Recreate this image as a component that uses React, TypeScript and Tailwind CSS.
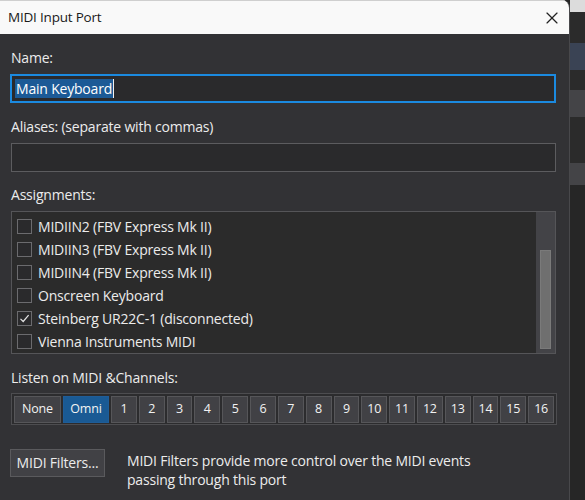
import { X } from 'lucide-react'

const assignments = [
  { label: 'MIDIIN2 (FBV Express Mk II)', checked: false },
  { label: 'MIDIIN3 (FBV Express Mk II)', checked: false },
  { label: 'MIDIIN4 (FBV Express Mk II)', checked: false },
  { label: 'Onscreen Keyboard', checked: false },
  { label: 'Steinberg UR22C-1 (disconnected)', checked: true },
  { label: 'Vienna Instruments MIDI', checked: false },
]

const channels = Array.from({ length: 16 }, (_, i) => String(i + 1))

function CheckBox({ checked }: { checked: boolean }) {
  return (
    <span className="flex h-[15px] w-[15px] shrink-0 items-center justify-center border border-[#6b6b6e] bg-[#2a2a2c]">
      {checked && (
        <svg width="11" height="11" viewBox="0 0 11 11" fill="none">
          <path d="M1.5 5.8 L4.2 8.5 L9.6 2.2" stroke="#e6e6e6" strokeWidth="1.2" />
        </svg>
      )}
    </span>
  )
}

function ChannelButton({ label, active, className }: { label: string; active?: boolean; className?: string }) {
  return (
    <div
      className={`flex h-[27px] items-center justify-center border text-[12.5px] font-medium text-[#f2f2f2] ${
        active ? 'border-[#1f5d98] bg-[#1a5a94]' : 'border-[#565659] bg-[#414145]'
      } ${className ?? ''}`}
    >
      {label}
    </div>
  )
}

export default function App() {
  return (
    <div
      className="flex h-[500px] w-[585px] overflow-hidden bg-[#262626]"
      style={{ fontFamily: '"Open Sans", "Noto Sans", sans-serif' }}
    >
      {/* dialog */}
      <div className="flex w-[570px] shrink-0 flex-col overflow-hidden rounded-tr-[8px] border-r border-[#48484b]">
        <div className="flex h-[34px] items-center justify-between border-t border-[#cfcfcf] bg-[#f9f9f9] pl-[8px] pr-[7px]">
          <span className="text-[13.5px] tracking-[-0.2px] text-[#1a1a1a]">MIDI Input Port</span>
          <X className="h-[20px] w-[20px] text-[#222]" strokeWidth={1.4} />
        </div>

        <div className="flex flex-1 flex-col bg-[#323235] pl-[11px] pr-[13px] pt-[14px] text-[14px] leading-[20px] tracking-[-0.2px] text-[#ececec]">
          <div>Name:</div>
          <div className="-ml-[1px] mt-[6px] flex h-[29px] items-center border-2 border-[#1b8ae0] bg-[#2a2a2c] px-[3px]">
            <span className="flex h-[19px] items-center bg-[#1c5a96] px-[1px] text-white">Main Keyboard</span>
            <span className="h-[19px] w-[1px] bg-[#f0f0f0]" />
          </div>

          <div className="mt-[14px]">Aliases: (separate with commas)</div>
          <div className="mt-[6px] h-[29px] border border-[#5c5c5f] bg-[#2a2a2c]" />

          <div className="mt-[13px]">Assignments:</div>
          <div className="mt-[6px] flex h-[143px] border border-[#555558] bg-[#2b2b2b]">
            <div className="flex flex-1 flex-col pt-[3px]">
              {assignments.map((a) => (
                <div key={a.label} className="flex h-[23px] items-center gap-[6px] pl-[5px]">
                  <CheckBox checked={a.checked} />
                  <span>{a.label}</span>
                </div>
              ))}
            </div>
            {/* scrollbar */}
            <div className="flex w-[19px] flex-col bg-[#434347] px-[4px] pb-[4px] pt-[38px]">
              <div className="flex-1 border border-[#7a7a7a] bg-[#6f6f6f]" />
            </div>
          </div>

          <div className="mt-[14px]">Listen on MIDI &amp;Channels:</div>
          <div className="mt-[5px] flex h-[32px] w-[546px] items-center gap-[2px] border border-[#4d4d50] bg-[#2c2c2e] px-[2px]">
            <ChannelButton label="None" className="w-[47px]" />
            <ChannelButton label="Omni" active className="w-[46px]" />
            {channels.map((c) => (
              <ChannelButton key={c} label={c} className="flex-1" />
            ))}
          </div>

          <div className="mt-[24px] flex items-start">
            <div className="-ml-[1px] flex h-[28px] w-[95px] items-center justify-center border border-[#5a5a5d] bg-[#414145]">
              MIDI Filters...
            </div>
            <p className="ml-[22px] mt-[2px] leading-[19px]">
              MIDI Filters provide more control over the MIDI events
              <br />
              passing through this port
            </p>
          </div>
        </div>
      </div>

      {/* window behind the dialog */}
      <div className="flex flex-1 flex-col">
        <div className="h-[12px] bg-[#dcdcdc]" />
        <div className="h-[31px] bg-[#2b2b2b]" />
        <div className="h-[27px] bg-[#3a4354]" />
        <div className="h-[20px] bg-[#2b2b2b]" />
        <div className="h-[27px] bg-[#444447]" />
        <div className="h-[46px] bg-[#2b2b2b]" />
        <div className="h-[22px] bg-[#444447]" />
        <div className="flex-1 bg-[#262626]" />
      </div>
    </div>
  )
}
